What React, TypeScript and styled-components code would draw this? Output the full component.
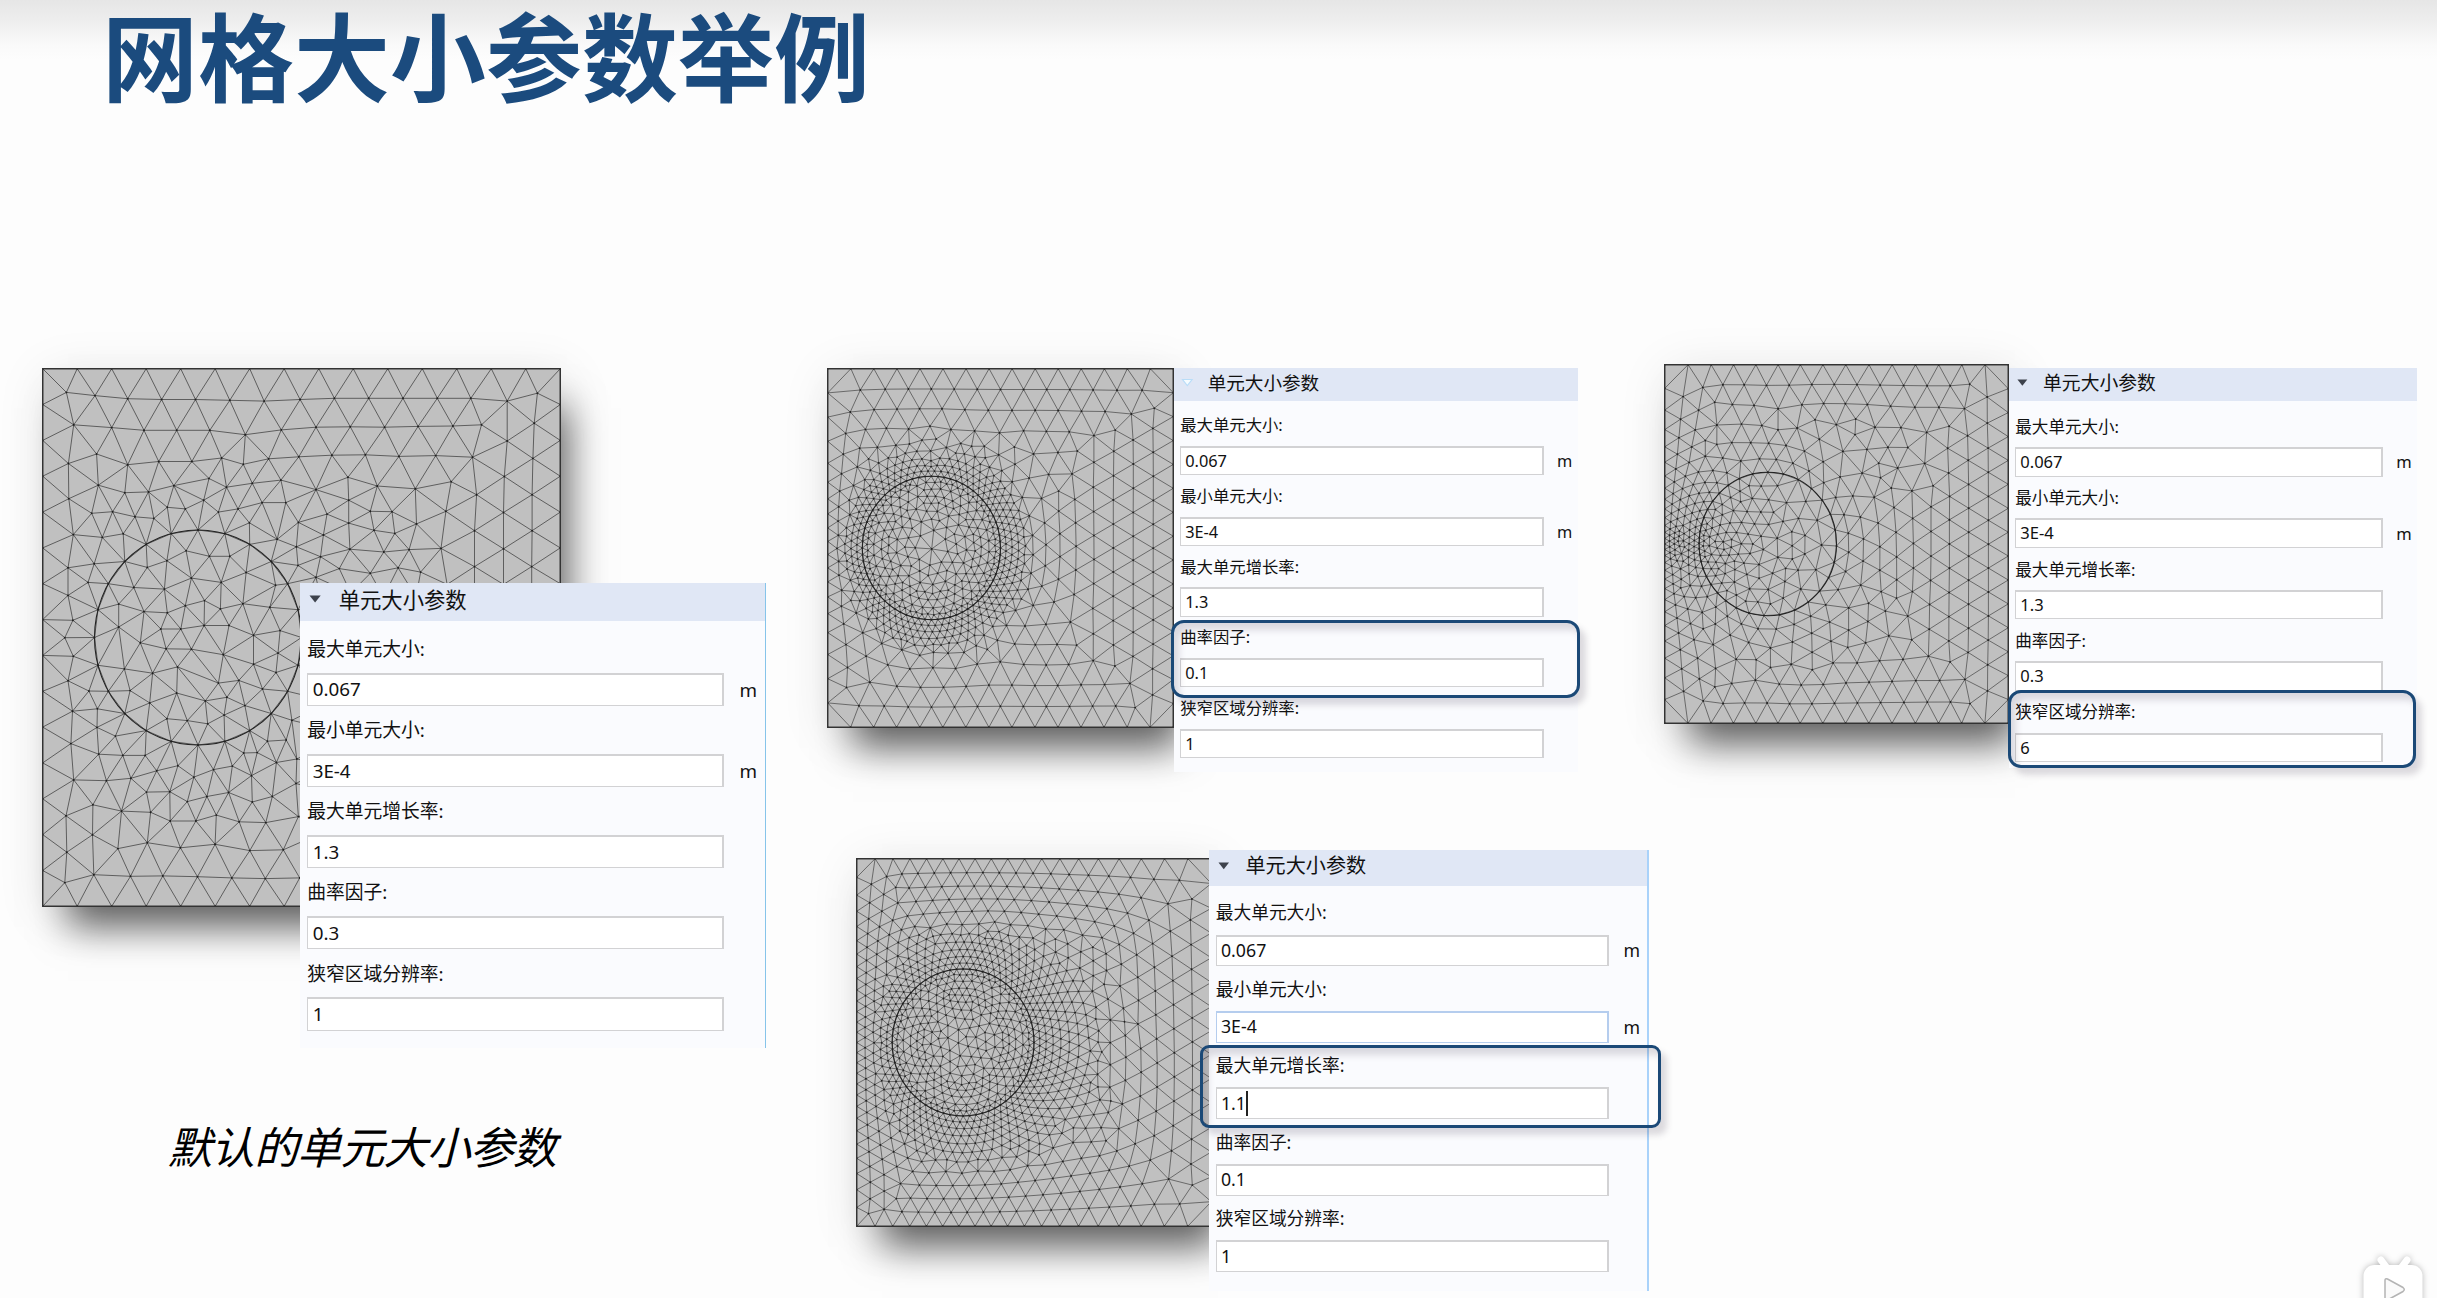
import React from "react";
import styled, { createGlobalStyle, css } from "styled-components";

/* ---------- mesh generation ---------- */

type Pt = [number, number];
type Size = (x: number, y: number) => number;

const CX = 0.3;
const CY = 0.5;
const R = 0.2;

/** Delaunay triangulation (Bowyer-Watson); returns unique edges. */
function triangulate(pts: Pt[]): [number, number][] {
  const n = pts.length;
  const all: Pt[] = [...pts, [-20, -20], [20, -20], [0, 40]];
  type T = { a: number; b: number; c: number; x: number; y: number; r: number };
  const make = (a: number, b: number, c: number): T => {
    const [ax, ay] = all[a];
    const bx = all[b][0] - ax;
    const by = all[b][1] - ay;
    const cx = all[c][0] - ax;
    const cy = all[c][1] - ay;
    const d = 2 * (bx * cy - by * cx) || 1e-12;
    const ux = (cy * (bx * bx + by * by) - by * (cx * cx + cy * cy)) / d;
    const uy = (bx * (cx * cx + cy * cy) - cx * (bx * bx + by * by)) / d;
    return { a, b, c, x: ax + ux, y: ay + uy, r: ux * ux + uy * uy };
  };
  let tris: T[] = [make(n, n + 1, n + 2)];
  for (let i = 0; i < n; i++) {
    const [px, py] = all[i];
    const keep: T[] = [];
    const edges = new Map<number, [number, number]>();
    const flip = (u: number, v: number) => {
      const key = Math.min(u, v) * 100000 + Math.max(u, v);
      if (edges.has(key)) edges.delete(key);
      else edges.set(key, [u, v]);
    };
    for (const t of tris) {
      const dx = px - t.x;
      const dy = py - t.y;
      if (dx * dx + dy * dy < t.r - 1e-12) {
        flip(t.a, t.b);
        flip(t.b, t.c);
        flip(t.c, t.a);
      } else keep.push(t);
    }
    edges.forEach(([u, v]) => keep.push(make(u, v, i)));
    tris = keep;
  }
  const out = new Map<number, [number, number]>();
  for (const t of tris) {
    if (t.a >= n || t.b >= n || t.c >= n) continue;
    for (const [u, v] of [[t.a, t.b], [t.b, t.c], [t.c, t.a]]) {
      out.set(Math.min(u, v) * 100000 + Math.max(u, v), [u, v]);
    }
  }
  return [...out.values()];
}

/** Parameters 0..1 spaced along a curve according to the size field. */
function spread(at: (t: number) => Pt, length: number, h: Size): number[] {
  const steps = 2000;
  const acc = [0];
  for (let i = 0; i < steps; i++) {
    const [x, y] = at((i + 0.5) / steps);
    acc.push(acc[i] + length / steps / h(x, y));
  }
  const count = Math.round(acc[steps]);
  const out: number[] = [];
  let j = 0;
  for (let k = 0; k < count; k++) {
    const goal = (k * acc[steps]) / count;
    while (acc[j] < goal) j++;
    out.push(j / steps);
  }
  return out;
}

function buildMesh(h: Size, seed: number): { pts: Pt[]; edges: [number, number][] } {
  let s = seed;
  const rnd = () => {
    s = (s * 1664525 + 1013904223) % 4294967296;
    return s / 4294967296;
  };
  const pts: Pt[] = [];
  const dir: number[] = [];
  const walls: [(t: number) => Pt, number][] = [
    [(t) => [t, 0], 0],
    [(t) => [1, t], Math.PI / 2],
    [(t) => [1 - t, 1], 0],
    [(t) => [0, 1 - t], Math.PI / 2],
  ];
  const ring = (t: number): Pt => [
    CX + R * Math.sin(t * 2 * Math.PI),
    CY - R * Math.cos(t * 2 * Math.PI),
  ];
  spread(ring, 2 * Math.PI * R, h).forEach((t) => {
    pts.push(ring(t));
    dir.push(t * 2 * Math.PI);
  });
  walls.forEach(([at, a]) =>
    spread(at, 1, h).forEach((t) => {
      pts.push(at(t));
      dir.push(a);
    })
  );
  const fixed = pts.length;
  const fits = (x: number, y: number, k: number) => {
    const d = h(x, y);
    if (x < d * 0.5 || y < d * 0.5 || x > 1 - d * 0.5 || y > 1 - d * 0.5) return false;
    if (Math.abs(Math.hypot(x - CX, y - CY) - R) < d * 0.5) return false;
    const lim = d * d * k * k;
    for (const p of pts) {
      const dx = p[0] - x;
      const dy = p[1] - y;
      if (dx * dx + dy * dy < lim) return false;
    }
    return true;
  };
  for (let i = 0; i < pts.length; i++) {
    for (let k = 0; k < 6; k++) {
      const a = dir[i] + (k * Math.PI) / 3;
      const d = h(pts[i][0], pts[i][1]);
      const x = pts[i][0] + d * Math.cos(a);
      const y = pts[i][1] + d * Math.sin(a);
      if (fits(x, y, 0.78)) {
        pts.push([x, y]);
        dir.push(dir[i]);
      }
    }
  }
  for (let i = 0; i < 8000; i++) {
    const x = rnd();
    const y = rnd();
    if (fits(x, y, 0.76)) pts.push([x, y]);
  }
  let edges = triangulate(pts);
  for (let pass = 0; pass < 3; pass++) {
    const sum = pts.map(() => [0, 0, 0]);
    edges.forEach(([u, v]) => {
      sum[u][0] += pts[v][0];
      sum[u][1] += pts[v][1];
      sum[u][2]++;
      sum[v][0] += pts[u][0];
      sum[v][1] += pts[u][1];
      sum[v][2]++;
    });
    for (let i = fixed; i < pts.length; i++) {
      pts[i] = [sum[i][0] / sum[i][2], sum[i][1] / sum[i][2]];
    }
    edges = triangulate(pts);
  }
  return { pts, edges };
}

const ringDistance = (x: number, y: number) => Math.hypot(x - CX, y - CY) - R;

const curvatureMesh = buildMesh((x, y) => {
  const d = ringDistance(x, y);
  return Math.min(0.067, d < 0 ? 0.0185 - d * 0.12 : 0.0185 + Math.max(0, d - 0.03) * 0.2 + d * 0.04);
}, 7);

const narrowMesh = buildMesh((x, y) => {
  const gap = Math.hypot(Math.max(0, Math.abs(x - 0.05) - 0.05), y - CY);
  const near = Math.abs(ringDistance(x, y));
  return Math.min(0.067, 0.0145 + gap * 0.115, 0.046 + near * 0.06);
}, 11);

const growthMesh = buildMesh((x, y) => {
  const d = ringDistance(x, y);
  return Math.min(0.067, 0.0185 + (d < 0 ? -d * 0.07 : d * 0.092));
}, 5);

/* Nodes of the default mesh on a 1267 x 1361 grid whose origin is (106, 72). */
const defaultNodes: number[] = [
  164,132,234,140,314,148,397,150,480,150,564,152,648,154,736,150,820,147,904,147,988,147,1072,147,1154,147,1243,154,1317,134,
  182,214,275,221,354,228,434,228,515,228,602,239,690,227,775,220,859,219,943,220,1025,218,1110,217,1180,214,1243,255,1309,210,
  238,288,314,315,390,307,471,307,544,298,597,314,659,300,733,295,814,291,896,290,978,294,1068,292,1158,296,1306,299,
  169,312,242,367,307,386,365,384,427,368,513,350,556,372,619,362,689,354,775,378,853,347,925,369,1018,376,1106,358,1168,391,1236,345,1304,391,
  170,401,226,438,277,434,332,447,378,451,411,423,455,427,500,405,536,435,584,427,643,411,701,411,732,461,802,440,855,405,908,433,961,434,1093,433,1234,436,
  612,462,680,504,727,523,793,493,855,463,917,481,968,489,1021,465,1163,482,1304,482,
  181,492,252,499,303,490,858,529,786,548,941,536,1003,530,1081,527,1234,528,1163,573,1303,573,
  168,576,232,566,362,575,410,558,457,533,514,547,564,547,604,588,731,570,832,578,908,590,976,576,1031,587,775,600,
  217,613,329,626,404,630,470,602,543,613,596,667,676,620,
  168,646,292,668,354,687,411,690,455,672,502,659,541,680,662,676,292,726,395,731,444,731,501,722,562,722,622,747,687,735,180,709,160,753,181,800,345,766,408,781,470,782,548,796,622,820,682,792,
  168,862,219,888,306,832,320,887,375,843,436,827,434,893,368,918,504,913,557,904,536,868,586,861,644,883,677,841,601,925,550,949,
  179,939,240,933,239,980,284,1002,410,958,460,963,510,971,716,962,656,1015,702,1012,
  175,1021,243,1048,302,1051,357,1051,437,1077,385,1090,322,1109,524,1087,570,1078,598,1045,631,1044,678,1069,728,1060,476,1106,617,1102,
  182,1113,262,1115,360,1144,417,1143,460,1168,508,1155,561,1145,619,1169,668,1155,726,1122,
  229,1176,163,1204,299,1192,370,1195,418,1217,481,1217,531,1202,587,1219,652,1221,732,1206,
  228,1252,165,1296,290,1287,362,1272,443,1285,528,1276,613,1292,695,1290,
  231,1353,160,1373,321,1357,400,1356,485,1358,569,1361,651,1363,735,1361,
  1096,618,1163,664,1234,618,1303,664,860,640,940,650,1020,650,790,670,
];

const defaultMesh = (() => {
  const pts: Pt[] = [];
  for (let i = 0; i < 24; i++) {
    const a = (i / 12) * Math.PI;
    pts.push([CX + R * Math.sin(a), CY - R * Math.cos(a)]);
  }
  for (let i = 0; i < 15; i++) {
    const t = i / 15;
    pts.push([t, 0], [1, t], [1 - t, 1], [0, 1 - t]);
  }
  for (let i = 0; i < defaultNodes.length; i += 2) {
    pts.push([(defaultNodes[i] - 106) / 1267, (defaultNodes[i + 1] - 72) / 1361]);
  }
  for (let row = 0; row < 8; row++) {
    for (let col = 0; col < 7; col++) {
      pts.push([0.555 + col * 0.066 + (row % 2) * 0.033, 0.5 + row * 0.0595]);
    }
  }
  return { pts, edges: triangulate(pts) };
})();

/* ---------- page parts ---------- */

const sans = `"Noto Sans", "Noto Sans CJK SC", sans-serif`;

const GlobalStyle = createGlobalStyle`
  html, body { margin: 0; padding: 0; background: #fdfdfd; }
  body { overflow: hidden; }
  *, *::before, *::after { box-sizing: border-box; }
`;

const Slide = styled.main`
  position: relative;
  width: 2437px;
  height: 1298px;
  overflow: hidden;
  background: linear-gradient(#e6e6e6 0, #efefef 24px, #fafafa 46px, #fdfdfd 60px);
  font-family: ${sans};
  color: #111;
`;

const Title = styled.h1`
  margin: 0;
  height: 364px;
  padding: 0 0 0 102px;
  font: 700 96px/105px "Noto Sans CJK SC", sans-serif;
  color: #1b4b7e;
`;

const Board = styled.div`
  display: flex;
  align-items: flex-start;
`;

const DefaultColumn = styled.section`
  width: 785px;
  padding: 4px 0 0 42px;
`;

const OverlapFigure = styled.div`
  display: grid;
  justify-items: start;
  align-items: start;
  & > * { grid-area: 1 / 1; }
`;

const PanelOffset = styled.div`
  padding: 215px 0 0 258px;
`;

const Caption = styled.p`
  margin: 66px 0 0 126px;
  font: italic 400 44px/62px "Noto Sans CJK SC", sans-serif;
  letter-spacing: -0.9px;
  color: #000;
  white-space: nowrap;
`;

const Examples = styled.section`
  flex: 1;
`;

const TopRow = styled.div`
  display: flex;
  align-items: flex-start;
  height: 486px;
  padding-left: 42px;
`;

const BottomRow = styled.div`
  display: flex;
  padding-left: 71px;
`;

const Figure = styled.figure<{ $right?: number }>`
  display: flex;
  align-items: flex-start;
  margin: 0 ${(p) => p.$right ?? 0}px 0 0;
`;

const MeshFrame = styled.div<{ $w: number; $h: number; $top?: number }>`
  flex: none;
  width: ${(p) => p.$w}px;
  height: ${(p) => p.$h}px;
  margin-top: ${(p) => p.$top ?? 0}px;
  background: #c0c0c0;
  box-shadow: 16px 30px 36px -10px rgba(0, 0, 0, 0.6), 4px 8px 48px rgba(0, 0, 0, 0.1);
  & > svg { display: block; }
`;

const Panel = styled.div<{ $w: number; $h: number; $font: number; $pull?: number; $top?: number; $edge?: string }>`
  position: relative;
  flex: none;
  width: ${(p) => p.$w}px;
  height: ${(p) => p.$h}px;
  margin: ${(p) => p.$top ?? 0}px 0 0 ${(p) => p.$pull ?? 0}px;
  font-size: ${(p) => p.$font}px;
  background: #fafbfe;
  ${(p) => p.$edge && css`border-right: ${p.$edge};`}
`;

const PanelHeader = styled.div`
  display: flex;
  align-items: center;
  height: 2.02em;
  padding: 0 0 0.28em 0.48em;
  background: #e0e7f5;
`;

const Arrow = styled.svg`
  flex: none;
  width: 0.65em;
  height: 0.43em;
  margin-right: 0.93em;
  overflow: visible;
`;

const PanelTitle = styled.span`
  font: 400 1.135em/1.5 "Noto Sans CJK SC", sans-serif;
`;

const Fields = styled.div`
  padding: 0.22em 0 0 0.38em;
`;

const Label = styled.div`
  display: flex;
  align-items: center;
  height: 2.527em;
  padding-top: 0.06em;
  font-family: ${sans};
  line-height: 1.3;
  white-space: nowrap;
`;

const FieldRow = styled.div`
  display: flex;
  align-items: center;
  height: 1.787em;
`;

const Field = styled.div<{ $active?: boolean }>`
  display: flex;
  align-items: center;
  width: 22.18em;
  height: 100%;
  padding-left: 0.24em;
  border: 1px solid ${(p) => (p.$active ? "#b5cdee" : "#d2d2d4")};
  border-top-width: 2px;
  border-right-width: 2px;
  background: #fff;
  line-height: 1;
`;

const Unit = styled.span`
  margin: 0.1em 0 0 0.82em;
  line-height: 1;
`;

const Caret = styled.span`
  width: 2px;
  height: 1.4em;
  background: #222;
`;

const Highlight = styled.div<{ $x: number; $y: number; $w: number; $h: number; $r: number }>`
  position: absolute;
  left: ${(p) => p.$x}px;
  top: ${(p) => p.$y}px;
  width: ${(p) => p.$w}px;
  height: ${(p) => p.$h}px;
  border: 3px solid #1b4977;
  border-radius: ${(p) => p.$r}px;
  box-shadow: 6px 7px 6px rgba(60, 50, 70, 0.17), inset 5px 7px 7px rgba(60, 50, 70, 0.17);
`;

const Player = styled.svg`
  position: absolute;
  left: 2350px;
  top: 1246px;
  overflow: visible;
  filter: drop-shadow(0 0 3px rgba(0, 0, 0, 0.28));
`;

interface MeshProps {
  mesh: { pts: Pt[]; edges: [number, number][] };
  w: number;
  h: number;
  top?: number;
  weight?: number;
}

function Mesh({ mesh, w, h, top, weight = 0.8 }: MeshProps) {
  const X = (v: number) => (0.7 + v * (w - 1.4)).toFixed(1);
  const Y = (v: number) => (0.7 + v * (h - 1.4)).toFixed(1);
  const { pts, edges } = mesh;
  const lines = edges
    .map(([a, b]) => `M${X(pts[a][0])} ${Y(pts[a][1])}L${X(pts[b][0])} ${Y(pts[b][1])}`)
    .join("");
  const dots = pts.map(([x, y]) => `M${X(x)} ${Y(y)}h0`).join("");
  return (
    <MeshFrame $w={w} $h={h} $top={top}>
      <svg width={w} height={h} fill="none">
        <path d={lines} stroke="#333" strokeOpacity={0.78} strokeWidth={weight} />
        <path d={dots} stroke="#111" strokeOpacity={0.75} strokeWidth={1.9} strokeLinecap="round" />
        <ellipse cx={X(CX)} cy={Y(CY)} rx={R * (w - 1.4)} ry={R * (h - 1.4)} stroke="#222" strokeWidth={1.1} />
        <rect x={0.7} y={0.7} width={w - 1.4} height={h - 1.4} stroke="#333" strokeWidth={1.4} />
      </svg>
    </MeshFrame>
  );
}

interface ParamProps {
  values: string[];
  active?: number;
  caret?: number;
  pale?: boolean;
}

const labels = ["最大单元大小:", "最小单元大小:", "最大单元增长率:", "曲率因子:", "狭窄区域分辨率:"];

function Params({ values, active, caret, pale }: ParamProps) {
  return (
    <>
      <PanelHeader>
        <Arrow viewBox="0 0 12 8" preserveAspectRatio="none">
          <path
            d="M0.5 0.5H11.5L6 7.5Z"
            fill={pale ? "#f6fcff" : "#3d424c"}
            stroke={pale ? "#b9ddf8" : "none"}
            strokeWidth={1.2}
          />
        </Arrow>
        <PanelTitle>单元大小参数</PanelTitle>
      </PanelHeader>
      <Fields>
        {values.map((value, i) => (
          <div key={labels[i]}>
            <Label>{labels[i]}</Label>
            <FieldRow>
              <Field $active={active === i}>
                {value}
                {caret === i && <Caret />}
              </Field>
              {i < 2 && <Unit>m</Unit>}
            </FieldRow>
          </div>
        ))}
      </Fields>
    </>
  );
}

export default function App() {
  return (
    <>
      <GlobalStyle />
      <Slide>
        <Title>网格大小参数举例</Title>
        <Board>
          <DefaultColumn>
            <OverlapFigure>
              <Mesh mesh={defaultMesh} w={519} h={539} weight={0.9} />
              <PanelOffset>
                <Panel $w={466} $h={465} $font={18.8} $edge="1px solid #86c4ea">
                  <Params values={["0.067", "3E-4", "1.3", "0.3", "1"]} />
                </Panel>
              </PanelOffset>
            </OverlapFigure>
            <Caption>默认的单元大小参数</Caption>
          </DefaultColumn>
          <Examples>
            <TopRow>
              <Figure $right={86}>
                <Mesh mesh={curvatureMesh} w={347} h={360} top={4} />
                <Panel $w={404} $h={404} $font={16.38} $top={4}>
                  <Params values={["0.067", "3E-4", "1.3", "0.1", "1"]} pale />
                  <Highlight $x={-3} $y={252} $w={409} $h={78} $r={13} />
                </Panel>
              </Figure>
              <Figure>
                <Mesh mesh={narrowMesh} w={345} h={360} />
                <Panel $w={408} $h={400} $font={16.56} $top={4}>
                  <Params values={["0.067", "3E-4", "1.3", "0.3", "6"]} />
                  <Highlight $x={-1} $y={322} $w={408} $h={78} $r={13} />
                </Panel>
              </Figure>
            </TopRow>
            <BottomRow>
              <Figure>
                <Mesh mesh={growthMesh} w={356} h={369} top={8} />
                <Panel $w={440} $h={441} $font={17.73} $pull={-3} $edge="2px solid #a9d2fa">
                  <Params values={["0.067", "3E-4", "1.1", "0.1", "1"]} active={1} caret={2} />
                  <Highlight $x={-9} $y={195} $w={461} $h={83} $r={9} />
                </Panel>
              </Figure>
            </BottomRow>
          </Examples>
        </Board>
        <Player width={87} height={60} viewBox="0 0 87 60">
          <path d="M31 14L37 22M57 14L51 22" stroke="#fff" strokeWidth={7} strokeLinecap="round" />
          <rect x={13.5} y={19} width={59} height={52} rx={11} fill="#fff" />
          <path
            d="M35 34.5Q35 32 37.5 33L53 41.5Q55.5 43.5 53 45.5L37.5 54Q35 55 35 52.5Z"
            fill="#fafafa"
            stroke="#b4b4b4"
            strokeWidth={1.5}
          />
        </Player>
      </Slide>
    </>
  );
}
